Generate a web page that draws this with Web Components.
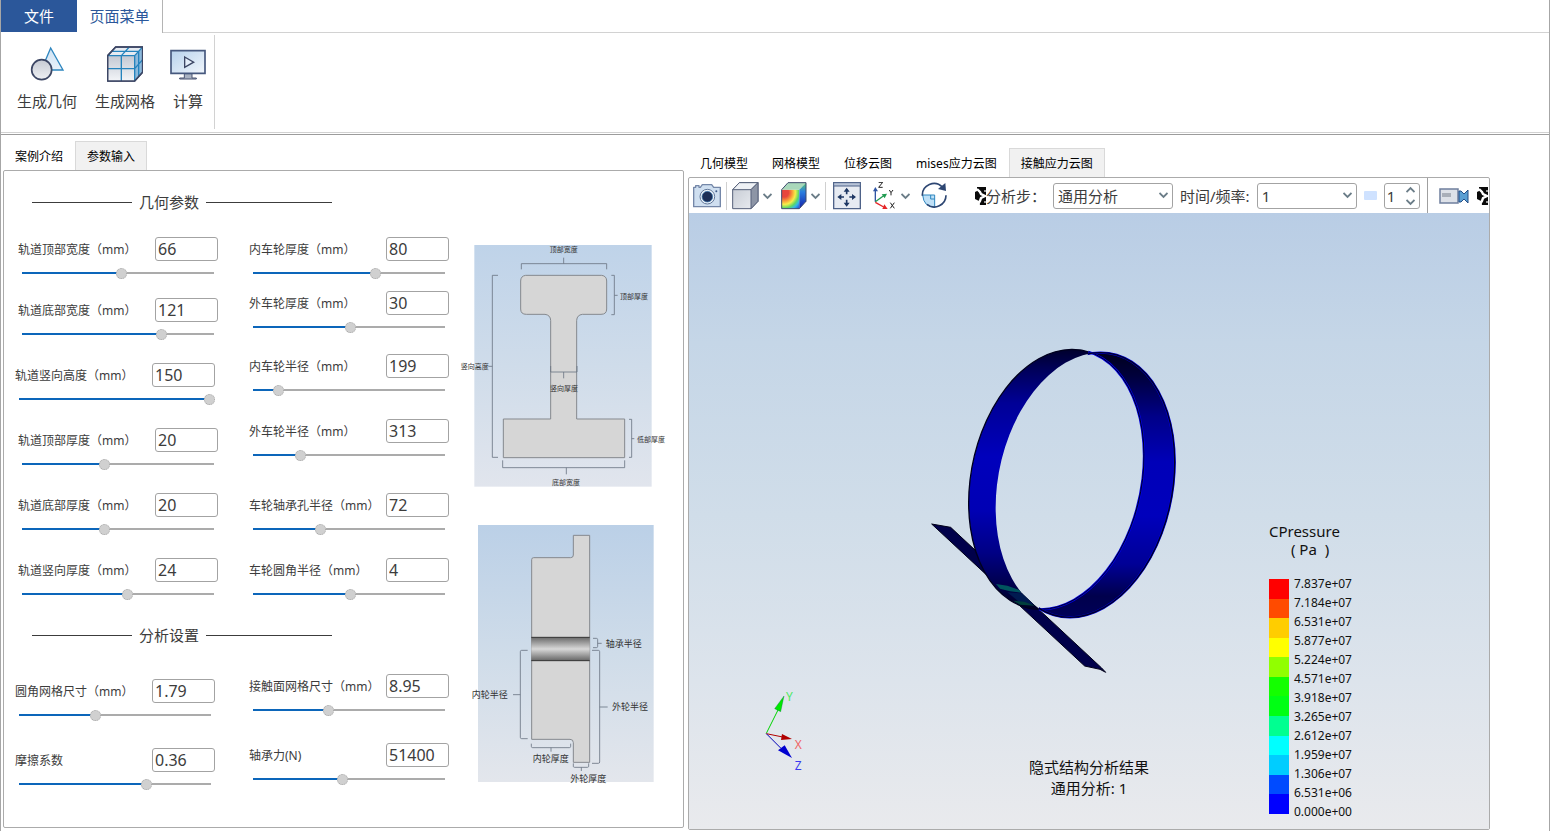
<!DOCTYPE html>
<html lang="zh-CN">
<head>
<meta charset="utf-8">
<title>页面菜单</title>
<style>
html, body {
  margin: 0;
  height: 100%;
  background: #fff;
}
body {
  font-family: "Noto Sans", "Noto Sans CJK SC", sans-serif;
  font-size: 15px;
  color: #3c3c3c;
}
</style>
</head>
<body>

<cae-app>
  <ribbon-bar slot="ribbon">
    <ribbon-button label="生成几何">
      <svg width="36" height="36" viewBox="87 138 108 108">
        <defs><linearGradient id="g1" x2="0" y2="1"><stop offset="0" stop-color="#cfe2f3"/><stop offset="1" stop-color="#e8f1fa"/></linearGradient>
        <linearGradient id="g2" x2="0" y2="1"><stop offset="0" stop-color="#c6cad3"/><stop offset="1" stop-color="#eef0f4"/></linearGradient></defs>
        <path d="M152 144L189 210H124Z" fill="url(#g1)" stroke="#2e86bf" stroke-width="4"/>
        <circle cx="125" cy="209" r="30" fill="url(#g2)" stroke="#3c4664" stroke-width="5"/>
      </svg>
    </ribbon-button>
    <ribbon-button label="生成网格">
      <svg width="36" height="36" viewBox="321 138 108 108">
        <defs><linearGradient id="m1" x2="0" y2="1"><stop offset="0" stop-color="#c3c8d2"/><stop offset="1" stop-color="#f3f5f8"/></linearGradient></defs>
        <path d="M323 167L347 141H428V216L404 243H323Z" fill="#e6ebf2" stroke="#3c4664" stroke-width="4" stroke-linejoin="round"/>
        <path d="M323 167H404V243H323Z" fill="url(#m1)"/>
        <path d="M404 167L428 141V216L404 243Z" fill="#8cb9dc"/>
        <path d="M364 243V167L388 141M323 206H404L428 179M335 154H416V229M404 167V243M323 167H404L428 141" fill="none" stroke="#2583bd" stroke-width="4"/>
        <path d="M323 167L347 141H428V216L404 243H323Z" fill="none" stroke="#3c4664" stroke-width="5" stroke-linejoin="round"/>
      </svg>
    </ribbon-button>
    <ribbon-button label="计算">
      <svg width="36" height="36" viewBox="511 138 108 108">
        <defs><linearGradient id="c1" x2="1" y2="1"><stop offset="0" stop-color="#b7d2ec"/><stop offset="1" stop-color="#f1f6fc"/></linearGradient></defs>
        <path d="M554 221H577V234H590V237H540V234H554Z" fill="#a9b2c2" stroke="#4a5573" stroke-width="3"/>
        <path d="M514 152H616V220H514Z" fill="url(#c1)" stroke="#46587e" stroke-width="5"/>
        <path d="M555 171L582 186.500L555 202Z" fill="#e4eefa" stroke="#3c4664" stroke-width="4"/>
      </svg>
    </ribbon-button>
  </ribbon-bar>

  <tab-panel slot="side" tabs="案例介绍,参数输入" selected="1">
    <div class="inputs">
      <div class="fields">
        <section-title>几何参数</section-title>
        <div class="group geometry">
          <div class="col rail">
            <param-field value="66" pos="50.8">轨道顶部宽度（mm）</param-field>
            <param-field value="121" pos="72.4">轨道底部宽度（mm）</param-field>
            <param-field value="150" pos="100" outdent>轨道竖向高度（mm）</param-field>
            <param-field value="20" pos="41.6">轨道顶部厚度（mm）</param-field>
            <param-field value="20" pos="41.6">轨道底部厚度（mm）</param-field>
            <param-field value="24" pos="54.1">轨道竖向厚度（mm）</param-field>
          </div>
          <div class="col wheel">
            <param-field value="80" pos="63.3">内车轮厚度（mm）</param-field>
            <param-field value="30" pos="49.7">外车轮厚度（mm）</param-field>
            <param-field value="199" pos="10.6">内车轮半径（mm）</param-field>
            <param-field value="313" pos="22.6">外车轮半径（mm）</param-field>
            <param-field value="72" pos="33.4">车轮轴承孔半径（mm）</param-field>
            <param-field value="4" pos="49.7">车轮圆角半径（mm）</param-field>
          </div>
        </div>
        <section-title>分析设置</section-title>
        <div class="group analysis">
          <div class="col mesh">
            <param-field value="1.79" pos="38.3" outdent>圆角网格尺寸（mm）</param-field>
            <param-field value="0.36" pos="66" outdent>摩擦系数</param-field>
          </div>
          <div class="col">
            <param-field value="8.95" pos="37.9">接触面网格尺寸（mm）</param-field>
            <param-field value="51400" pos="45.4">轴承力(N)</param-field>
          </div>
        </div>
      </div>
      <div class="diagrams">
        <rail-diagram></rail-diagram>
        <wheel-diagram></wheel-diagram>
      </div>
    </div>
  </tab-panel>

  <tab-panel slot="view" tabs="几何模型,网格模型,位移云图,mises应力云图,接触应力云图" selected="4">
    <view-toolbar></view-toolbar>
    <result-view></result-view>
  </tab-panel>
</cae-app>

<style>
/* content slotted into the parameter panel */
.inputs { display: flex; }
.fields { flex: 0 0 451px; padding: 20px 0 37px; box-sizing: border-box; }
.diagrams { flex: 0 0 220px; padding-top: 64px; display: flex; flex-direction: column; gap: 20px; }
.group { display: grid; grid-template-columns: 231px 200px; padding-left: 14px; align-items: start; }
.col { display: grid; }
.geometry { margin: 24px 0; }
.rail { grid-template-rows: 61px 65px 65px 65px 65px 42px; }
.wheel { grid-template-rows: 54px 63px 65px 74px 65px 42px; }
.analysis { margin-top: 28px; }
.analysis .col { grid-template-rows: 69px 42px; }
.analysis .mesh { padding-top: 5px; }
</style>

<script>
function attach(el, html) {
  const template = document.createElement("template");
  template.innerHTML = html;
  const root = el.attachShadow({ mode: "open" });
  root.appendChild(template.content.cloneNode(true));
  return root;
}

class CaeApp extends HTMLElement {
  constructor() {
    super();
    attach(this, `<style>
:host {
  display: flex;
  flex-direction: column;
  min-height: 100vh;
  box-sizing: border-box;
  border-left: 1px solid #a6a6a6;
  border-right: 1px solid #a6a6a6;
  margin-right: 1px;
}
main {
  flex: 1;
  display: flex;
  gap: 4px;
  margin-top: 1px;
  border-top: 1px solid #9c9c9c;
  padding: 0 59px 0 2px;
}
.side { flex: 0 0 681px; display: flex; padding: 6px 0 3px; }
.view { flex: 1; min-width: 0; display: flex; padding: 13px 0 1px; }
</style>
<slot name="ribbon"></slot>
<main>
  <div class="side"><slot name="side"></slot></div>
  <div class="view"><slot name="view"></slot></div>
</main>`);
  }
}

class RibbonBar extends HTMLElement {
  constructor() {
    super();
    attach(this, `<style>
:host { display: block; }
nav { display: flex; height: 33px; }
nav button {
  font: inherit;
  border: 0;
  padding: 0 0 2px;
  color: #2b579a;
  background: #fff;
}
nav .file { width: 76px; margin-bottom: 1px; background: #2b579a; color: #fff; }
nav .page { width: 86px; border-right: 1px solid #b4b4b4; }
nav .rest { flex: 1; border-bottom: 1px solid #d2d2d2; }
.body { border-bottom: 1px solid #d2d2d2; padding: 2px 0 3px; display: flex; }
.tools { display: flex; gap: 18px; height: 94px; padding: 0 11px 0 16px; border-right: 1px solid #d2d2d2; }
</style>
<nav>
  <button class="file">文件</button>
  <button class="page">页面菜单</button>
  <div class="rest"></div>
</nav>
<div class="body"><div class="tools"><slot></slot></div></div>`);
  }
}

class RibbonButton extends HTMLElement {
  constructor() {
    super();
    attach(this, `<style>
:host { display: block; }
::slotted(svg) { margin: 0 -3px; }
button {
  display: flex;
  flex-direction: column;
  align-items: center;
  gap: 8px;
  font: inherit;
  line-height: 22px;
  color: inherit;
  background: none;
  border: 0;
  padding: 11px 0 0;
}
</style>
<button><slot></slot><span>${this.getAttribute("label")}</span></button>`);
  }
}

class TabPanel extends HTMLElement {
  constructor() {
    super();
    const selected = Number(this.getAttribute("selected"));
    const tabs = this.getAttribute("tabs").split(",").map((name, i) =>
      `<button role="tab" aria-selected="${i === selected}">${name}</button>`).join("");
    const root = attach(this, `<style>
:host { display: flex; flex-direction: column; flex: 1; min-width: 0; }
.tabs { display: flex; }
button {
  height: 29px;
  box-sizing: border-box;
  padding: 0 11px;
  font: inherit;
  font-size: 12px;
  color: #000;
  background: none;
  border: 1px solid transparent;
  border-bottom: 0;
}
button[aria-selected=true] { background: #f1f1f1; border-color: #d9d9d9; }
.panel {
  flex: 1;
  display: flex;
  flex-direction: column;
  border: 1px solid #ababab;
  border-radius: 2px;
}
</style>
<div class="tabs" role="tablist">${tabs}</div>
<div class="panel"><slot></slot></div>`);
    const buttons = root.querySelectorAll("button");
    buttons.forEach((b) => b.addEventListener("click", () => {
      buttons.forEach((o) => o.setAttribute("aria-selected", o === b));
    }));
  }
}

class SectionTitle extends HTMLElement {
  constructor() {
    super();
    attach(this, `<style>
:host { display: flex; align-items: center; gap: 7px; padding-left: 28px; line-height: 22px; }
i { height: 1px; width: 100px; background: #3c3c3c; }
i:last-child { width: 126px; }
</style><i></i><slot></slot><i></i>`);
  }
}

class ParamField extends HTMLElement {
  constructor() {
    super();
    const root = attach(this, `<style>
:host { display: grid; grid-template-columns: 137px 63px; grid-template-rows: 24px 12px; row-gap: 6px; width: 200px; }
:host([outdent]) { margin-left: -3px; }
label { font-size: 12px; line-height: 26px; white-space: nowrap; }
.value {
  font: inherit;
  font-size: 16px;
  color: inherit;
  box-sizing: border-box;
  width: 63px;
  height: 24px;
  padding: 0 2px;
  border: 1px solid #a3a3a3;
  border-radius: 3px;
  background: #fff;
}
.slider {
  -webkit-appearance: none;
  appearance: none;
  grid-column: 1 / 3;
  width: 196px;
  height: 12px;
  margin: 0 0 0 4px;
  background: linear-gradient(90deg, #0c66ba var(--fill), #ababab var(--fill)) 0 5px / 192px 2px no-repeat;
}
.slider::-webkit-slider-thumb {
  -webkit-appearance: none;
  box-sizing: border-box;
  width: 11px;
  height: 11px;
  border-radius: 50%;
  background: #d0d0d0;
  border: 1px dotted #a8a8a8;
}
</style>
<label for="value"><slot></slot></label>
<input id="value" class="value" value="${this.getAttribute("value")}">
<input class="slider" type="range" min="0" max="100" step="0.1" value="${this.getAttribute("pos")}" aria-labelledby="value">`);
    this.slider = root.querySelector(".slider");
    this.slider.addEventListener("input", () => this.fill());
    this.fill();
  }
  fill() {
    // thumb travels 185px, its centre starts 5px in
    this.slider.style.setProperty("--fill", Math.round(5 + this.slider.value * 1.85) + "px");
  }
}

const diagramStyle = `<style>
:host { display: block; }
svg { display: block; overflow: visible; }
text { fill: #333; text-anchor: middle; }
.dim { fill: none; stroke: #6b7684; stroke-width: 2.5; }
.part { fill: #d6d6d6; stroke: #85898e; stroke-width: 3; }
</style>`;

class RailDiagram extends HTMLElement {
  constructor() {
    super();
    attach(this, `${diagramStyle}
<svg width="220" height="260" viewBox="0 0 660 780" font-size="21">
  <defs><linearGradient id="sky" x2="0" y2="1"><stop offset="0" stop-color="#bfd3e9"/><stop offset=".5" stop-color="#cfdcea"/><stop offset="1" stop-color="#e1e5ed"/></linearGradient></defs>
  <rect x="58" y="30" width="532" height="725" fill="url(#sky)"/>
  <path class="part" d="M212 121H440Q455 123 455 138V222Q455 238 438 238H382Q366 240 365 256V552H509V668H145V552H287V256Q286 240 270 238H214Q197 238 197 222V138Q197 123 212 121Z"/>
  <path class="dim" d="M199 103V86H455V103M326 86V68M469 121H478V239H469M478 181H488M129 121H112V667H129M112 394H100M522 553H530V667H522M530 611H538M143 676V698H509V676M334 698V718"/>
  <path class="dim" stroke="#444" d="M287 393V411H366V393M326 411V430"/>
  <text x="326" y="51">顶部宽度</text>
  <text x="537" y="191">顶部厚度</text>
  <text x="59" y="403">竖向高度</text>
  <text x="327" y="468">竖向厚度</text>
  <text x="588" y="620">低部厚度</text>
  <text x="333" y="751">底部宽度</text>
</svg>`);
  }
}

class WheelDiagram extends HTMLElement {
  constructor() {
    super();
    attach(this, `${diagramStyle}
<svg width="220" height="280" viewBox="0 0 660 840" font-size="27">
  <defs>
    <linearGradient id="sky" x2="0" y2="1"><stop offset="0" stop-color="#bbd0e7"/><stop offset=".5" stop-color="#cfdce9"/><stop offset="1" stop-color="#e3e6ec"/></linearGradient>
    <linearGradient id="bore" x2="0" y2="1"><stop offset="0" stop-color="#6a6a6a"/><stop offset=".5" stop-color="#d8d8d8"/><stop offset="1" stop-color="#666"/></linearGradient>
  </defs>
  <rect x="69" y="30" width="527" height="771" fill="url(#sky)"/>
  <path class="part" d="M236 128H347Q355 128 355 120V61H404V742H355V683Q355 673 345 673H230V134Q230 128 236 128Z"/>
  <rect x="229" y="367" width="175" height="70" fill="url(#bore)"/>
  <path d="M229 367H404M229 437H404" stroke="#333" stroke-width="3"/>
  <path class="dim" d="M414 370H424Q428 370 428 374V394Q428 398 424 398H414M428 385H440M218 406H200Q196 406 196 410V667Q196 671 200 671H218M174 539H196M411 406H430Q434 406 434 410V741Q434 745 430 745H411M434 576H458M229 686V694Q229 698 233 698H343Q347 698 347 694V686M288 698V710M355 745V754Q355 757 359 757H397Q401 757 401 754V745M379 757V768"/>
  <text x="506" y="395">轴承半径</text>
  <text x="104" y="549">内轮半径</text>
  <text x="525" y="586">外轮半径</text>
  <text x="287" y="742">内轮厚度</text>
  <text x="400" y="801">外轮厚度</text>
</svg>`);
  }
}

const chevron = `<svg width="9" height="8" viewBox="0 0 9 8"><path d="M0.500 2L4.500 6L8.500 2" fill="none" stroke="#6b7d88" stroke-width="1.800"/></svg>`;
// half-clipped arrow glyph that closes the icon rows
const overflowMark = `<svg class="mark" width="11" height="18" viewBox="0 0 11 18">
<defs><filter id="soft"><feGaussianBlur stdDeviation=".5"/></filter></defs>
<path d="M2 0H11V18H5L4 14L0 12V5L2 4Z" fill="#0a0a0a"/>
<g filter="url(#soft)"><path d="M2 2L5 5L6 7L10 9L6 11L5 14L3 17" stroke="#fff" stroke-width="2.400" fill="none"/><path d="M9 3H11V5H9ZM9 14H11V16H9Z" fill="#999"/></g></svg>`;

class ViewToolbar extends HTMLElement {
  constructor() {
    super();
    const select = (id, width, value) => `<span class="select" style="width:${width}px">
<select id="${id}"><option>${value}</option></select>${chevron}</span>`;
    attach(this, `<style>
:host {
  display: flex;
  align-items: center;
  height: 35px;
  padding-left: 4px;
  overflow: hidden;
  line-height: 22px;
  white-space: nowrap;
}
svg { display: block; flex: none; }
button { font: inherit; border: 0; padding: 0; background: none; display: flex; align-items: center; gap: 4px; }
.bar { flex: none; width: 1px; height: 28px; margin: 0 5px; background: #d0d0d0; }
.bar.full { height: 35px; margin: 0 11px 0 7px; background: #a0a0a0; }
.cube { margin-right: 9px; }
.fit { margin: 0 12px 0 2px; }
.axes { margin-right: 11px; }
.rotate { margin-right: 27px; }
label { margin: 0 7px 0 0; }
.select { position: relative; flex: none; margin-right: 7px; }
select, .spin {
  -webkit-appearance: none;
  appearance: none;
  box-sizing: border-box;
  width: 100%;
  height: 26px;
  display: block;
  font: inherit;
  color: inherit;
  padding: 0 4px;
  background: #fff;
  border: 1px solid #a3a3a3;
  border-radius: 3px;
}
.select svg { position: absolute; right: 5px; top: 8px; pointer-events: none; }
.chip { flex: none; width: 13px; height: 9px; background: #cfe2ff; margin-right: 7px; border-radius: 1px; }
.spin { display: flex; width: 36px; flex: none; padding: 0 4px 0 2px; align-items: center; }
.spin input { font: inherit; color: inherit; border: 0; padding: 0; width: 19px; min-width: 0; -moz-appearance: textfield; appearance: textfield; background: none; }
.spin input::-webkit-inner-spin-button { -webkit-appearance: none; display: none; }
.steps { display: flex; flex-direction: column; gap: 4px; }
.up svg { transform: rotate(180deg); }
.record { margin-right: 8px; }
</style>
<button aria-label="截图"><svg width="28" height="28" viewBox="24 109 84 84">
  <path d="M26 125H32V120H42V125H46L52 117H80L86 125H106V183H26Z" fill="#cfdff0" stroke="#7487a8" stroke-width="4" stroke-linejoin="round"/>
  <circle cx="67" cy="153" r="22" fill="#f1f6fb" stroke="#60779a" stroke-width="3"/><circle cx="67" cy="153" r="16" fill="#1d2f57" stroke="#3a7ab5" stroke-width="2"/><circle cx="94" cy="137" r="3" fill="#3c5887"/></svg></button>
<span class="bar"></span>
<button class="cube" aria-label="显示模式"><svg width="27" height="28" viewBox="142 109 81 84">
  <defs><linearGradient id="face" x2="1" y2="1"><stop offset="0" stop-color="#c3c8d1"/><stop offset="1" stop-color="#eceff3"/></linearGradient></defs>
  <path d="M144 132L164 111H220V167L199 189H144Z" fill="url(#face)" stroke="#56607a" stroke-width="3" stroke-linejoin="round"/>
  <path d="M144 132L164 111H220L199 132Z" fill="#eef1f5" stroke="#56607a" stroke-width="3"/>
  <path d="M199 132L220 111V167L199 189Z" fill="#8d95a6" stroke="#56607a" stroke-width="3"/></svg>${chevron}</button>
<button class="contour" aria-label="云图"><svg width="26" height="28" viewBox="287 109 78 84">
  <defs><radialGradient id="hot" cx="0.150" cy="0.150" r="1.200"><stop offset=".2" stop-color="#e8453c"/><stop offset=".38" stop-color="#f9a13a"/><stop offset=".52" stop-color="#f6ee4a"/><stop offset=".68" stop-color="#5fd866"/><stop offset=".8" stop-color="#35b7e8"/><stop offset="1" stop-color="#1d3fd6"/></radialGradient>
  <linearGradient id="cold" x2="0" y2="1"><stop offset="0" stop-color="#58c96a"/><stop offset=".35" stop-color="#2b7fe0"/><stop offset="1" stop-color="#1420a8"/></linearGradient></defs>
  <path d="M289 132H342V189H289Z" fill="url(#hot)"/>
  <path d="M289 132L308 111H362L342 132Z" fill="#a9d8bb"/>
  <path d="M342 132L362 111V167L342 189Z" fill="url(#cold)"/>
  <path d="M289 132L308 111H362V167L342 189H289Z" fill="none" stroke="#3d4a6b" stroke-width="3"/></svg>${chevron}</button>
<span class="bar"></span>
<button class="fit" aria-label="适应窗口"><svg width="28" height="28" viewBox="444 109 84 84">
  <path d="M446 111H526V189H446Z" fill="#e7ebf2" stroke="#4e6288" stroke-width="4"/><path d="M446 111H526V121H446Z" fill="#b8c4d8" stroke="#4e6288" stroke-width="3"/>
  <path d="M485 131V146M485 162V178M462 154H477M493 154H509" stroke="#1f3864" stroke-width="5"/>
  <path d="M476 138L485 126L494 138ZM476 171L485 183L494 171ZM469 145L457 154L469 163ZM501 145L513 154L501 163Z" fill="#1f3864"/></svg></button>
<button class="axes" aria-label="视角"><svg width="24" height="28" viewBox="564 109 72 84">
  <path d="M571 168V132" stroke="#2f55a4" stroke-width="4"/><path d="M564 137L571 124L579 137Z" fill="#2f55a4"/>
  <path d="M571 168L596 150" stroke="#1f9b50" stroke-width="4"/><path d="M590 146L606 144L599 158Z" fill="#1f9b50"/>
  <path d="M571 170L596 184" stroke="#e52528" stroke-width="4"/><path d="M598 176L608 190L592 190Z" fill="#e52528"/>
  <path d="M581 110H593L581 125H593M613 133L618 141L624 133M618 141V149M616 171L628 188M628 171L616 188" fill="none" stroke="#222" stroke-width="3"/></svg>${chevron}</button>
<button class="rotate" aria-label="旋转"><svg width="27" height="28" viewBox="704 109 81 84">
  <path d="M709 148H745V185Q712 184 709 148Z" fill="#bfe0f7" stroke="#2e86bf" stroke-width="3"/><path d="M733 148V160H745" fill="none" stroke="#2e86bf" stroke-width="3"/>
  <path d="M708 150A35 35 0 0 1 768 124M779 149A35 35 0 0 1 722 176" fill="none" stroke="#2d4672" stroke-width="5"/><path d="M755 130L777 112L779 136Z" fill="#2d4672"/></svg></button>
${overflowMark}
<label for="step">分析步：</label>${select("step", 120, "通用分析")}
<label for="time">时间/频率:</label>${select("time", 100, "1")}
<span class="chip"></span>
<span class="spin">
  <input type="number" value="1" min="1" aria-label="帧">
  <span class="steps"><button class="up" aria-label="增加">${chevron}</button><button aria-label="减少">${chevron}</button></span>
</span>
<span class="bar full"></span>
<button class="record" aria-label="录制"><svg width="30" height="28" viewBox="0 0 30 28">
  <path d="M1 7H19V21H1Z" fill="#dde1e8" stroke="#6f7f9d" stroke-width="1.500"/><path d="M3 11H12V15H3Z" fill="#a9afb9"/>
  <path d="M20 9H22L25 12L29 8V21L25 17L22 20H20Z" fill="#5b9fd3" stroke="#234d86"/></svg></button>
${overflowMark}`);
    const number = this.shadowRoot.querySelector(".spin input");
    const [up, down] = this.shadowRoot.querySelectorAll(".steps button");
    up.addEventListener("click", () => number.stepUp());
    down.addEventListener("click", () => number.stepDown());
  }
}

const levels = ["7.837e+07", "7.184e+07", "6.531e+07", "5.877e+07", "5.224e+07", "4.571e+07", "3.918e+07",
  "3.265e+07", "2.612e+07", "1.959e+07", "1.306e+07", "6.531e+06", "0.000e+00"];
const colors = ["#f00", "#ff4b00", "#ffcd00", "#ff0", "#91ff00", "#14ff00", "#00ff14", "#00ff91", "#0ff", "#00cdff", "#004bff", "#00f"];

class ColorLegend extends HTMLElement {
  constructor() {
    super();
    attach(this, `<style>
:host { display: block; color: #111; }
.name { line-height: 18px; width: 70px; }
.unit { line-height: 18px; padding-left: 22px; margin-bottom: 16px; white-space: pre; }
.scale { display: flex; gap: 5px; }
.bars { display: flex; flex-direction: column; width: 20px; margin: 5px 0 7px; }
.bars i { flex: 1; }
ul { list-style: none; margin: 0; padding: 0; font-size: 12px; line-height: 19px; }
</style>
<div class="name">CPressure</div>
<div class="unit">( Pa  )</div>
<div class="scale">
  <div class="bars">${colors.map((c) => `<i style="background:${c}"></i>`).join("")}</div>
  <ul>${levels.map((l) => `<li>${l}</li>`).join("")}</ul>
</div>`);
  }
}

class ResultView extends HTMLElement {
  constructor() {
    super();
    attach(this, `<style>
:host {
  display: block;
  flex: 1;
  position: relative;
  overflow: hidden;
  background: linear-gradient(#b9cde5, #c5d6e7 21%, #d0dde9 49%, #dde4ec 76%, #e9eaed);
}
.model { position: absolute; left: calc(50% - 169px); top: calc(50% - 181px); }
.triad { position: absolute; left: 71px; bottom: 49px; }
.caption { position: absolute; left: 0; right: 0; bottom: 30px; margin: 0; text-align: center; line-height: 21px; color: #111; }
color-legend { position: absolute; right: 137px; bottom: 8px; }
</style>
<svg class="model" width="270" height="340" viewBox="0 0 810 1020">
  <defs>
    <linearGradient id="left" gradientUnits="userSpaceOnUse" x1="0" y1="28" x2="0" y2="833">
      <stop offset="0" stop-color="#00002c"/><stop offset=".08" stop-color="#00005c"/><stop offset=".2" stop-color="#000096"/><stop offset=".4" stop-color="#0000bc"/>
      <stop offset=".6" stop-color="#0000b4"/><stop offset=".76" stop-color="#000084"/><stop offset=".92" stop-color="#000038"/><stop offset="1" stop-color="#000018"/>
    </linearGradient>
    <linearGradient id="right" gradientUnits="userSpaceOnUse" x1="0" y1="28" x2="0" y2="833">
      <stop offset="0" stop-color="#000018"/><stop offset=".1" stop-color="#00003c"/><stop offset=".25" stop-color="#000088"/><stop offset=".42" stop-color="#0000b8"/>
      <stop offset=".62" stop-color="#0000bc"/><stop offset=".8" stop-color="#000096"/><stop offset=".92" stop-color="#00004c"/><stop offset="1" stop-color="#000058"/>
    </linearGradient>
    <clipPath id="leftHalf"><path d="M0 0H512L356 806V1020H0Z"/></clipPath>
    <clipPath id="rightHalf"><path d="M512 0H810V1020H356V806Z"/></clipPath>
    <path id="front" d="M455 28A255.400 395 12 1 1 363 808A255.400 395 12 1 1 455 28Z"/>
    <path id="back" d="M541 38A261 401 11.600 1 1 450 832A261 401 11.600 1 1 541 38Z"/>
    <path id="band" fill-rule="evenodd" d="M455 28A255.400 395 12 1 1 363 808A255.400 395 12 1 1 455 28ZM541 38A261 401 11.600 1 1 450 832A261 401 11.600 1 1 541 38Z"/>
  </defs>
  <path d="M35 552L92 562L545 984L557 997L540 988L494 978Z" fill="#00004a" stroke="#000018" stroke-width="3"/>
  <g clip-path="url(#leftHalf)">
    <use href="#band" fill="url(#left)"/>
    <use href="#front" fill="none" stroke="#00001e" stroke-width="4"/>
  </g>
  <g clip-path="url(#rightHalf)">
    <use href="#band" fill="url(#right)"/>
    <use href="#front" fill="none" stroke="#0000e4" stroke-width="7"/>
    <use href="#front" fill="none" stroke="#000024" stroke-width="3"/>
    <use href="#back" fill="none" stroke="#0000e4" stroke-width="7"/>
    <use href="#back" fill="none" stroke="#000024" stroke-width="4"/>
  </g>
  <path d="M228 732L262 737L298 750L303 758L270 754L240 746Z" fill="#00555e"/>
  <path d="M262 757L306 760L342 794L300 788Z" fill="#001a50"/>
  <path d="M280 782L312 785L346 797L300 794Z" fill="#003f3c"/>
</svg>
<svg class="triad" width="60" height="100" viewBox="60 0 180 300" font-size="36">
  <path d="M79 160L114 90" stroke="#00d400" stroke-width="3"/><path d="M132 48L104 86L122 95Z" fill="#00e800" stroke="#064" stroke-width="1"/>
  <path d="M79 161L128 171" stroke="#b00000" stroke-width="3"/><path d="M156 177L126 162L123 180Z" fill="#b00000"/>
  <path d="M79 161L122 204" stroke="#0000b8" stroke-width="3"/><path d="M156 234L134 196L114 211Z" fill="#0000d0"/>
  <text x="138" y="62" fill="#4dea62">Y</text><text x="164" y="206" fill="#f06464">X</text><text x="164" y="270" fill="#3a3af0">Z</text>
</svg>
<p class="caption">隐式结构分析结果<br>通用分析: 1</p>
<color-legend></color-legend>`);
  }
}

customElements.define("ribbon-bar", RibbonBar);
customElements.define("ribbon-button", RibbonButton);
customElements.define("tab-panel", TabPanel);
customElements.define("section-title", SectionTitle);
customElements.define("param-field", ParamField);
customElements.define("rail-diagram", RailDiagram);
customElements.define("wheel-diagram", WheelDiagram);
customElements.define("color-legend", ColorLegend);
customElements.define("view-toolbar", ViewToolbar);
customElements.define("result-view", ResultView);
customElements.define("cae-app", CaeApp);
</script>
</body>
</html>
